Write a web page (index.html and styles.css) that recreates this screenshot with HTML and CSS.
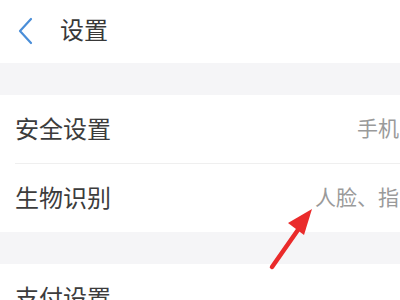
FILE: index.html
```html
<!DOCTYPE html>
<html lang="zh">
<head>
<meta charset="utf-8">
<link rel="stylesheet" href="styles.css">
</head>
<body>
<div class="page">
  <header class="topbar">
    <svg class="back" width="18" height="28" viewBox="0 0 18 28"><path d="M15 2 L4 14 L15 26" fill="none" stroke="#4a8ed8" stroke-width="2.2" stroke-linecap="round" stroke-linejoin="round"/></svg>
    <span class="title">设置</span>
  </header>
  <div class="gap"></div>
  <section class="group">
    <div class="row"><span class="label">安全设置</span><span class="value">手机</span></div>
    <div class="divider"></div>
    <div class="row"><span class="label">生物识别</span><span class="value">人脸、指</span></div>
  </section>
  <div class="gap"></div>
  <section class="group">
    <div class="row"><span class="label">支付设置</span></div>
  </section>
  <svg class="pointer" width="60" height="80" viewBox="0 0 60 80">
    <line x1="8" y1="74" x2="36" y2="34" stroke="#ea2b2b" stroke-width="4.5" stroke-linecap="round"/>
    <polygon points="48,16 24,30 40,42" fill="#ea2b2b"/>
  </svg>
</div>
</body>
</html>
```
FILE: styles.css
```css
html, body {
  margin: 0;
  padding: 0;
  background: #ffffff;
  overflow: hidden;
}
.page {
  position: relative;
  width: 400px;
  font-family: "Noto Sans CJK SC", "Noto Sans", sans-serif;
}
.topbar {
  height: 63px;
  display: flex;
  align-items: center;
  padding-left: 16px;
  gap: 26px;
  box-sizing: border-box;
}
.back {
  display: block;
  margin-top: -2px;
}
.title {
  font-size: 24px;
  color: #383838;
  margin-top: -6px;
}
.gap {
  height: 32px;
  background: #f5f5f7;
}
.group {
  background: #fff;
}
.row {
  height: 68px;
  display: flex;
  align-items: center;
  justify-content: space-between;
  padding: 0 1px 0 15px;
}
.label {
  font-size: 24px;
  color: #3c3c3c;
  margin-top: -4px;
}
.value {
  font-size: 21px;
  color: #9a9a9a;
  white-space: nowrap;
  margin-top: -4px;
}
.divider {
  height: 1px;
  background: #efefef;
  margin-left: 15px;
}
.pointer {
  position: absolute;
  left: 264px;
  top: 193px;
}
```
